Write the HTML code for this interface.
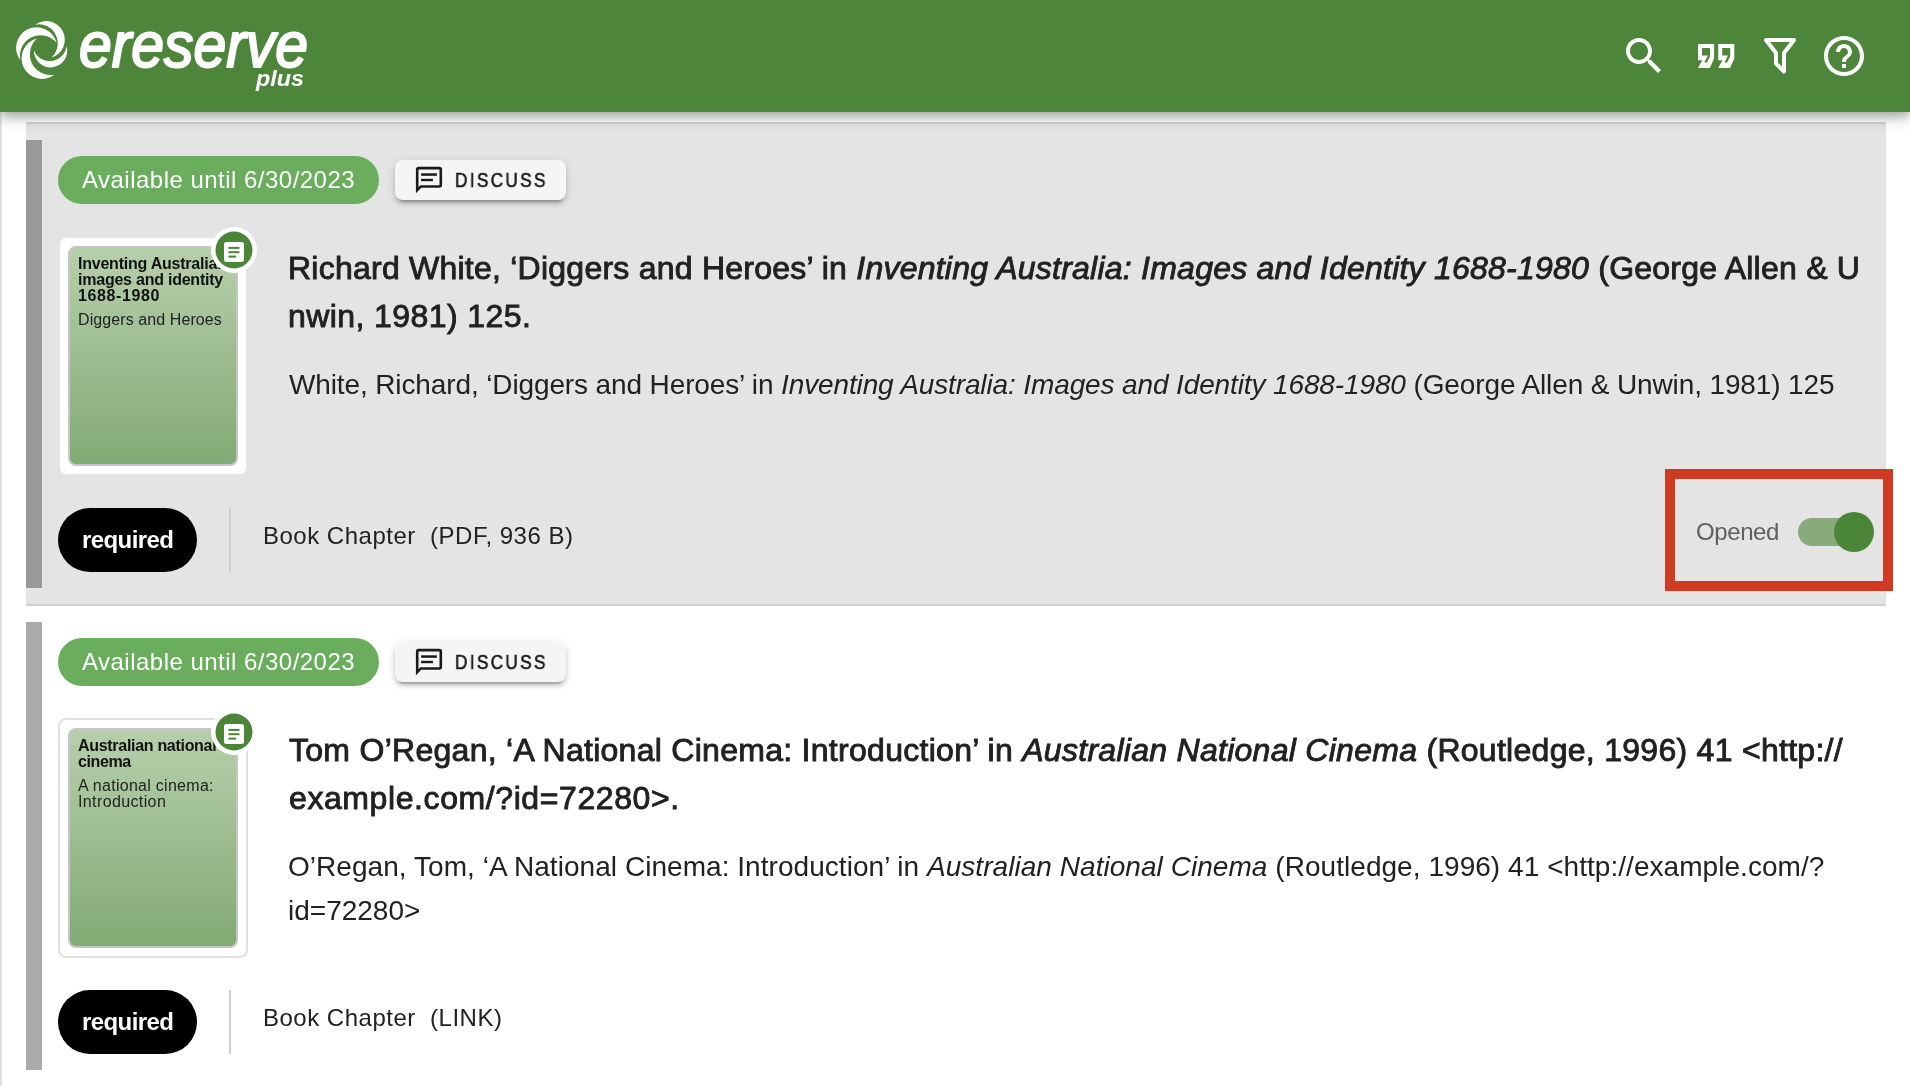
<!DOCTYPE html>
<html><head><meta charset="utf-8">
<style>
html,body{margin:0;padding:0;}
body{-webkit-font-smoothing:antialiased;width:1910px;height:1086px;overflow:hidden;position:relative;background:#fff;font-family:"Liberation Sans",sans-serif;color:#212121;}
.a{position:absolute;}
.t{position:absolute;white-space:nowrap;will-change:transform;}
#hdr{left:0;top:0;width:1910px;height:112px;background:#4d853a;box-shadow:0 4px 8px -2px rgba(0,0,0,.2),0 8px 10px 0 rgba(0,0,0,.14),0 2px 20px 0 rgba(0,0,0,.12);z-index:5;}
.strip{left:0;top:112px;width:2px;height:974px;background:#e0e0e0;}
.card{left:26px;width:1860px;height:480px;border-bottom:2px solid #d2d2d2;}
.bar{left:26px;width:16px;height:448px;}
.avail{left:58px;width:321px;height:48px;border-radius:24px;background:#69ad5d;color:#fff;font-size:24px;}
.disc{left:395px;width:171px;height:40px;border-radius:8px;background:#f5f5f5;box-shadow:0 6px 2px -4px rgba(0,0,0,.2),0 4px 4px 0 rgba(0,0,0,.14),0 2px 10px 0 rgba(0,0,0,.12);}
.frame{left:58px;width:186px;height:236px;border:2px solid #e0e0e0;border-radius:8px;background:#fff;}
.cover{left:68px;width:166px;height:216px;border:2px solid #c6c6c6;border-radius:8px;background:linear-gradient(#b6cfab,#82aa74);overflow:hidden;}
.req{left:58px;width:139px;height:64px;border-radius:32px;background:#000;color:#fff;font-weight:bold;font-size:24px;}
.div{left:229px;width:2px;height:64px;background:#cfcfcf;}
.title{font-size:32px;-webkit-text-stroke:0.9px #212121;color:#212121;}
.cit{font-size:28px;color:#212121;}
.meta{font-size:24px;color:#222;letter-spacing:0.5px;}
</style></head><body>
<div id="hdr" class="a"></div>
<div class="a strip"></div>

<!-- previous card border -->
<div class="a" style="left:26px;top:122px;width:1860px;height:2px;background:#d2d2d2;"></div>

<!-- card 1 -->
<div class="a card" style="top:124px;background:#e4e4e4;"></div>
<div class="a bar" style="top:140px;background:#999;"></div>
<div class="a avail" style="top:156px;"></div>
<div class="t" style="left:82px;top:164px;font-size:24px;line-height:32px;color:#fff;letter-spacing:0.48px;">Available until 6/30/2023</div>
<div class="a disc" style="top:160px;"></div>
<div class="t" style="left:455px;top:166px;font-size:20px;line-height:28px;letter-spacing:2.7px;color:#1a1a1a;-webkit-text-stroke:0.6px #1a1a1a;transform:scaleX(0.86);transform-origin:0 0;">DISCUSS</div>
<div class="a frame" style="top:236px;border-color:#e4e4e4;"></div>
<div class="a cover" style="top:246px;"></div>
<div class="t" style="left:78px;top:256px;font-size:16px;line-height:16px;font-weight:bold;color:#111;"><span style="letter-spacing:-0.23px">Inventing Australia:</span><br><span style="letter-spacing:-0.23px">images and identity</span><br><span style="letter-spacing:0.6px">1688-1980</span></div>
<div class="t" style="left:78px;top:312px;font-size:16px;line-height:16px;color:#222;letter-spacing:0.09px;">Diggers and Heroes</div>

<div class="t title" style="left:288px;top:244px;line-height:48px;letter-spacing:0.236px;">Richard White, ‘Diggers and Heroes’ in <i>Inventing Australia: Images and Identity 1688-1980</i> (George Allen &amp; U</div>
<div class="t title" style="left:288px;top:292px;line-height:48px;letter-spacing:0.42px;">nwin, 1981) 125.</div>
<div class="t cit" style="left:289px;top:363px;line-height:44px;letter-spacing:-0.123px;">White, Richard, ‘Diggers and Heroes’ in <i>Inventing Australia: Images and Identity 1688-1980</i> (George Allen &amp; Unwin, 1981) 125</div>

<div class="a req" style="top:508px;"></div>
<div class="t" style="left:82px;top:524px;font-size:24px;line-height:32px;font-weight:bold;color:#fff;letter-spacing:-0.58px;">required</div>
<div class="a div" style="top:508px;"></div>
<div class="t meta" style="left:263px;top:520px;line-height:32px;">Book Chapter&nbsp;&nbsp;(PDF, 936 B)</div>

<div class="t" style="left:1696px;top:516px;font-size:24px;line-height:32px;color:#5f5f5f;letter-spacing:-0.4px;">Opened</div>
<div class="a" style="left:1798px;top:518px;width:68px;height:28px;border-radius:14px;background:#89ab7b;"></div>
<div class="a" style="left:1834px;top:512px;width:40px;height:40px;border-radius:20px;background:#4b8538;"></div>
<div class="a" style="left:1665px;top:469px;width:208px;height:102px;border:10px solid #d03a21;"></div>

<!-- card 2 -->
<div class="a card" style="top:606px;background:#fff;"></div>
<div class="a bar" style="top:622px;background:#aaa;"></div>
<div class="a avail" style="top:638px;"></div>
<div class="t" style="left:82px;top:646px;font-size:24px;line-height:32px;color:#fff;letter-spacing:0.48px;">Available until 6/30/2023</div>
<div class="a disc" style="top:642px;"></div>
<div class="t" style="left:455px;top:648px;font-size:20px;line-height:28px;letter-spacing:2.7px;color:#1a1a1a;-webkit-text-stroke:0.6px #1a1a1a;transform:scaleX(0.86);transform-origin:0 0;">DISCUSS</div>
<div class="a frame" style="top:718px;"></div>
<div class="a cover" style="top:728px;"></div>
<div class="t" style="left:78px;top:738px;font-size:16px;line-height:16px;font-weight:bold;color:#111;"><span style="letter-spacing:-0.3px">Australian national</span><br><span style="letter-spacing:-0.4px">cinema</span></div>
<div class="t" style="left:78px;top:778px;font-size:16px;line-height:16px;color:#222;"><span style="letter-spacing:0.28px">A national cinema:</span><br><span style="letter-spacing:0.38px">Introduction</span></div>

<div class="t title" style="left:289px;top:726px;line-height:48px;letter-spacing:0.281px;">Tom O’Regan, ‘A National Cinema: Introduction’ in <i>Australian National Cinema</i> (Routledge, 1996) 41 &lt;http://</div>
<div class="t title" style="left:289px;top:774px;line-height:48px;letter-spacing:0.59px;">example.com/?id=72280&gt;.</div>
<div class="t cit" style="left:288px;top:845px;line-height:44px;letter-spacing:0.047px;">O’Regan, Tom, ‘A National Cinema: Introduction’ in <i>Australian National Cinema</i> (Routledge, 1996) 41 &lt;http://example.com/?</div>
<div class="t cit" style="left:288px;top:889px;line-height:44px;">id=72280&gt;</div>

<div class="a req" style="top:990px;"></div>
<div class="t" style="left:82px;top:1006px;font-size:24px;line-height:32px;font-weight:bold;color:#fff;letter-spacing:-0.58px;">required</div>
<div class="a div" style="top:990px;"></div>
<div class="t meta" style="left:263px;top:1002px;line-height:32px;">Book Chapter&nbsp;&nbsp;(LINK)</div>

<!-- icon overlay -->
<svg class="a" style="left:0;top:0;z-index:6;" width="1910" height="1086" viewBox="0 0 1910 1086">
<g fill="#fff">
<path d="M35.2,24.7 A18.61,18.61 0 1 1 51.3,57.6 A18.98,18.98 0 0 0 35.2,24.7 Z"/>
<path d="M20.3,60.2 A20.52,20.52 0 1 1 56.5,42.7 A20.74,20.74 0 0 0 20.3,60.2 Z"/>
<path d="M54.5,74.7 A20.51,20.51 0 1 1 37.1,38.5 A20.78,20.78 0 0 0 54.5,74.7 Z"/>
<path d="M33.9,50.2 A16.65,16.65 0 1 0 66.5,46 A16.89,16.89 0 0 1 33.9,50.2 Z"/>
<text x="79" y="66.6" font-family="Liberation Sans" font-style="italic" font-size="65" textLength="229" lengthAdjust="spacingAndGlyphs" stroke="#fff" stroke-width="2.2" stroke-linejoin="round">ereserve</text>
<text x="256" y="86" font-family="Liberation Sans" font-weight="bold" font-style="italic" font-size="22" textLength="48" lengthAdjust="spacingAndGlyphs">plus</text>
<path transform="translate(1620,32) scale(2)" d="M15.5 14h-.79l-.28-.27C15.41 12.59 16 11.11 16 9.5 16 5.91 13.09 3 9.5 3S3 5.91 3 9.5 5.91 16 9.5 16c1.61 0 3.090-.59 4.23-1.57l.27.28v.79l5 4.99L20.49 19l-4.99-5zm-6 0C7.01 14 5 11.990 5 9.5S7.01 5 9.5 5 14 7.01 14 9.5 11.99 14 9.5 14z"/>
<path fill-rule="evenodd" d="M1698,44 H1714.1 V58.5 L1709.8,68 H1698 L1702.3,60.2 H1698 Z M1702,48.1 V55.4 H1707.8 L1704.3,62.5 H1706.8 L1710,56.5 V48.1 Z"/><path fill-rule="evenodd" transform="translate(20.2,0)" d="M1698,44 H1714.1 V58.5 L1709.8,68 H1698 L1702.3,60.2 H1698 Z M1702,48.1 V55.4 H1707.8 L1704.3,62.5 H1706.8 L1710,56.5 V48.1 Z"/>
<path transform="translate(1820,32) scale(2)" d="M11 18h2v-2h-2v2zm1-16C6.48 2 2 6.48 2 12s4.48 10 10 10 10-4.48 10-10S17.52 2 12 2zm0 18c-4.41 0-8-3.59-8-8s3.59-8 8-8 8 3.59 8 8-3.59 8-8 8zm0-14c-2.21 0-4 1.79-4 4h2c0-1.1.9-2 2-2s2 .9 2 2c0 2-3 1.75-3 5h2c0-2.25 3-2.5 3-5 0-2.21-1.79-4-4-4z"/>
</g>
<path d="M1766,40 H1794 L1784,53 V71.5 L1776,63.5 V53 Z" fill="none" stroke="#fff" stroke-width="4" stroke-linejoin="round"/>
<g fill="#1a1a1a">
<path fill-rule="evenodd" d="M415.9,169.6 Q415.9,166.8 418.7,166.8 H439.3 Q442.1,166.8 442.1,169.6 V185 Q442.1,187.8 439.3,187.8 H421.3 L415.9,193.2 Z M418.5,169.4 V187.2 L420.3,185.2 H439.5 V169.4 Z"/>
<rect x="421.1" y="173.3" width="15.8" height="2.5"/>
<rect x="421.1" y="178.8" width="11.8" height="2.4"/>
</g>
<g transform="translate(0,482)">
<g fill="#1a1a1a">
<path fill-rule="evenodd" d="M415.9,169.6 Q415.9,166.8 418.7,166.8 H439.3 Q442.1,166.8 442.1,169.6 V185 Q442.1,187.8 439.3,187.8 H421.3 L415.9,193.2 Z M418.5,169.4 V187.2 L420.3,185.2 H439.5 V169.4 Z"/>
<rect x="421.1" y="173.3" width="15.8" height="2.5"/>
<rect x="421.1" y="178.8" width="11.8" height="2.4"/>
</g>
</g>
<g>
<circle cx="234" cy="250" r="23" fill="#fff"/>
<circle cx="234" cy="250" r="18.5" fill="#4b8538"/>
<rect x="224" y="242" width="20" height="20" rx="2.5" fill="#fff"/>
<g fill="#4b8538">
<rect x="228.4" y="246.9" width="11.1" height="2"/>
<rect x="228.4" y="251.2" width="11.1" height="2"/>
<rect x="228.4" y="255.6" width="7.8" height="2"/>
</g>
</g>
<g transform="translate(0,482)">
<g>
<circle cx="234" cy="250" r="23" fill="#fff"/>
<circle cx="234" cy="250" r="18.5" fill="#4b8538"/>
<rect x="224" y="242" width="20" height="20" rx="2.5" fill="#fff"/>
<g fill="#4b8538">
<rect x="228.4" y="246.9" width="11.1" height="2"/>
<rect x="228.4" y="251.2" width="11.1" height="2"/>
<rect x="228.4" y="255.6" width="7.8" height="2"/>
</g>
</g>
</g>
</svg>
</body></html>
